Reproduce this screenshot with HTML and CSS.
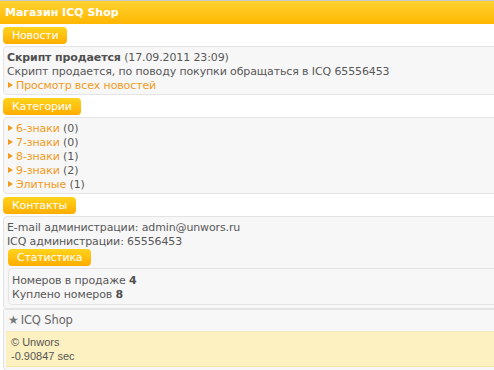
FILE: index.html
```html
<!DOCTYPE html>
<html>
<head>
<meta charset="utf-8">
<link rel="stylesheet" href="styles.css">
</head>
<body>
<div class="header">Магазин ICQ Shop</div>
<div class="page">
  <div class="tab">Новости</div>
  <div class="box">
    <div class="line"><b>Скрипт продается</b> (17.09.2011 23:09)</div>
    <div class="line">Скрипт продается, по поводу покупки обращаться в ICQ 65556453</div>
    <div class="line item"><a href="#">Просмотр всех новостей</a></div>
  </div>

  <div class="tab">Категории</div>
  <div class="box">
    <div class="line item"><a href="#">6-знаки</a> (0)</div>
    <div class="line item"><a href="#">7-знаки</a> (0)</div>
    <div class="line item"><a href="#">8-знаки</a> (1)</div>
    <div class="line item"><a href="#">9-знаки</a> (2)</div>
    <div class="line item"><a href="#">Элитные</a> (1)</div>
  </div>

  <div class="tab">Контакты</div>
  <div class="box contacts">
    <div class="line">E-mail администрации: admin@unwors.ru</div>
    <div class="line">ICQ администрации: 65556453</div>
    <div class="inner">
      <div class="tab">Статистика</div>
      <div class="box stats">
        <div class="line">Номеров в продаже <b>4</b></div>
        <div class="line">Куплено номеров <b>8</b></div>
      </div>
    </div>
  </div>

  <div class="box footer">
    <div class="brand"><span class="star">★</span>ICQ Shop</div>
    <div class="copy">
      <div>© Unwors</div>
      <div>-0.90847 sec</div>
    </div>
  </div>
</div>
</body>
</html>
```

FILE: styles.css
```css
html, body {
  margin: 0;
  padding: 0;
  overflow: hidden;
  background: #ffffff;
}
body {
  font-family: "DejaVu Sans", Verdana, sans-serif;
  font-size: 11px;
  letter-spacing: -0.12px;
  color: #575757;
}
.header {
  border-top: 1px solid #c9c9c9;
  height: 23px;
  line-height: 23px;
  padding-left: 5px;
  background: linear-gradient(#ffd232, #ffb700);
  color: #ffffff;
  font-weight: bold;
  font-size: 11px;
  letter-spacing: 0;
}
.page {
  margin-left: 3px;
  margin-right: -20px;
  display: flex;
  flex-direction: column;
  align-items: flex-start;
}
.tab {
  margin-top: 3px;
  margin-bottom: 2px;
  height: 17px;
  line-height: 17px;
  padding: 0 9px;
  border-radius: 4px;
  background: linear-gradient(#ffd41c, #ffac00);
  color: #ffffff;
  font-size: 11px;
  letter-spacing: -0.2px;
}
.box {
  align-self: stretch;
  box-sizing: border-box;
  background: #f7f7f7;
  border: 1px solid #e4e4e4;
  border-radius: 4px;
  padding: 4px 3px 1px 3px;
}
.line {
  line-height: 14px;
  white-space: nowrap;
}
.line b {
  color: #505050;
}
.item::before {
  content: "";
  display: inline-block;
  width: 0;
  height: 0;
  border-top: 3px solid transparent;
  border-bottom: 3px solid transparent;
  border-left: 5px solid #f39a1a;
  margin-right: 3px;
  margin-left: 1px;
  vertical-align: 1px;
}
a {
  color: #f39a1a;
  text-decoration: none;
}
.contacts {
  padding-bottom: 3px;
}
.inner {
  display: flex;
  flex-direction: column;
  align-items: flex-start;
  margin-left: 1px;
}
.inner .tab {
  margin-top: 0;
}
.stats {
  padding: 5px 3px 2px 3px;
}
.footer {
  padding: 0;
  margin-top: 0;
  border-radius: 0 0 4px 4px;
}
.brand {
  height: 21px;
  line-height: 21px;
  padding-left: 4px;
  color: #666666;
  font-size: 11.5px;
}
.star {
  margin-right: 2px;
  font-size: 12px;
  color: #777777;
}
.copy {
  margin-left: 2px;
  background: #fdf1c1;
  border-top: 1px solid #f3e9c3;
  border-bottom: 1px solid #f3e4a8;
  padding: 3px 4px 3px 5px;
  font-family: "Liberation Sans", Arial, sans-serif;
  font-size: 11px;
  letter-spacing: 0;
  line-height: 14px;
  color: #555555;
  margin-bottom: 3px;
}
```
